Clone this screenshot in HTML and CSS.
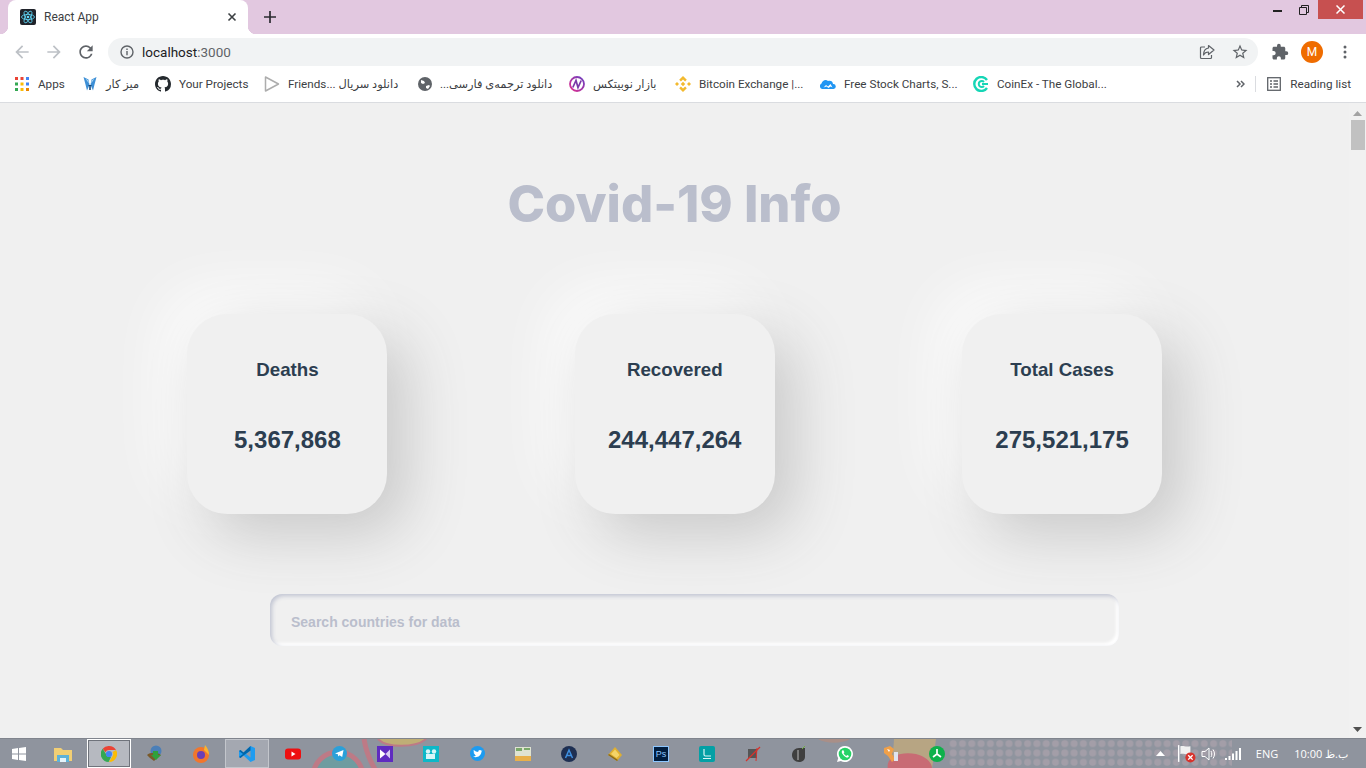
FILE: index.html
```html
<!DOCTYPE html>
<html lang="en">
<head>
    <meta charset="UTF-8">
    <title>React App</title>
    <link rel="stylesheet" href="styles.css">
</head>
<body>
<div class="browser">

    <div class="tabstrip">
        <div class="tab">
            <span class="favicon"><svg width="16" height="16" viewBox="0 0 16 16"><rect width="16" height="16" rx="2" fill="#20232a"/><g fill="none" stroke="#61dafb" stroke-width=".8"><ellipse cx="8" cy="8" rx="6.5" ry="2.6"/><ellipse cx="8" cy="8" rx="6.5" ry="2.6" transform="rotate(60 8 8)"/><ellipse cx="8" cy="8" rx="6.5" ry="2.6" transform="rotate(120 8 8)"/></g><circle cx="8" cy="8" r="1.3" fill="#61dafb"/></svg></span>
            <span class="tab-title">React App</span>
            <svg class="tab-close" width="10" height="10" viewBox="0 0 10 10"><path d="M1.5 1.5l7 7M8.5 1.5l-7 7" stroke="#3c4043" stroke-width="1.6"/></svg>
        </div>
        <svg class="new-tab" width="12" height="12" viewBox="0 0 12 12"><path d="M6 0v12M0 6h12" stroke="#2b2b30" stroke-width="1.7"/></svg>
        <div class="window-controls">
            <svg class="win-min" width="9" height="3" viewBox="0 0 9 3"><rect width="9" height="2" y="1" fill="#222"/></svg>
            <svg class="win-max" width="10" height="10" viewBox="0 0 10 10"><path d="M.5 2.5h7v7h-7zM2.5 2.5v-2h7v7h-2" fill="none" stroke="#222"/></svg>
            <div class="win-close"><svg width="9" height="9" viewBox="0 0 9 9"><path d="M.5.5l8 8M8.500.5l-8 8" stroke="#fff" stroke-width="1.5"/></svg></div>
        </div>
    </div>

    <div class="toolbar">
        <svg class="nav-icon" width="20" height="20" viewBox="0 0 24 24"><path fill="#bdc1c6" d="M20 11H7.83l5.59-5.59L12 4l-8 8 8 8 1.41-1.41L7.83 13H20v-2z"/></svg>
        <svg class="nav-icon" width="20" height="20" viewBox="0 0 24 24"><path fill="#bdc1c6" d="M12 4l-1.41 1.41L16.17 11H4v2h12.17l-5.58 5.59L12 20l8-8z"/></svg>
        <svg class="nav-icon" width="20" height="20" viewBox="0 0 24 24"><path fill="#5f6368" d="M17.65 6.35A7.958 7.958 0 0 0 12 4c-4.42 0-7.99 3.58-7.99 8s3.57 8 7.99 8c3.73 0 6.84-2.55 7.73-6h-2.08A5.99 5.99 0 0 1 12 18c-3.31 0-6-2.69-6-6s2.69-6 6-6c1.66 0 3.14.69 4.22 1.78L13 11h7V4l-2.35 2.35z"/></svg>
        <div class="omnibox">
            <svg width="14" height="14" viewBox="0 0 14 14"><circle cx="7" cy="7" r="6" fill="none" stroke="#5f6368" stroke-width="1.4"/><path d="M7 6v4.2M7 3.6v1.4" stroke="#5f6368" stroke-width="1.4"/></svg>
            <span class="url">localhost<span class="url-port">:3000</span></span>
            <svg class="omni-share" width="16" height="16" viewBox="0 0 16 16"><path d="M6 3H2.5a1 1 0 0 0-1 1v9.500a1 1 0 0 0 1 1h9a1 1 0 0 0 1-1V11" fill="none" stroke="#5f6368" stroke-width="1.2"/><path d="M9.500 1.500l5.500 4.500-5.500 4.500V8C7 8 5.500 9 4.500 11c0-4 2-6.500 5-7z" fill="none" stroke="#5f6368" stroke-width="1.2" stroke-linejoin="round"/></svg>
            <svg class="omni-star" width="18" height="18" viewBox="0 0 24 24"><path fill="#5f6368" d="M22 9.24l-7.19-.62L12 2 9.19 8.63 2 9.24l5.46 4.73L5.82 21 12 17.27 18.18 21l-1.63-7.03L22 9.24zM12 15.4l-3.76 2.27 1-4.28-3.32-2.88 4.38-.38L12 6.1l1.71 4.04 4.38.38-3.32 2.88 1 4.28L12 15.4z"/></svg>
        </div>
        <svg class="ext-icon" width="18" height="18" viewBox="0 0 24 24"><path fill="#5f6368" d="M20.5 11H19V7c0-1.1-.9-2-2-2h-4V3.500a2.500 2.500 0 0 0-5 0V5H4c-1.100 0-1.990.9-1.990 2v3.800H3.500c1.490 0 2.700 1.210 2.700 2.700s-1.210 2.700-2.700 2.700H2V20c0 1.100.9 2 2 2h3.800v-1.500c0-1.490 1.210-2.700 2.700-2.700 1.490 0 2.700 1.210 2.700 2.700V22H17c1.100 0 2-.9 2-2v-4h1.500a2.500 2.500 0 0 0 0-5z"/></svg>
        <span class="avatar">M</span>
        <svg class="menu-icon" width="4" height="14" viewBox="0 0 4 14"><circle cx="2" cy="2" r="1.5" fill="#5f6368"/><circle cx="2" cy="7" r="1.5" fill="#5f6368"/><circle cx="2" cy="12" r="1.5" fill="#5f6368"/></svg>
    </div>

    <div class="bookmarks">
        <a class="bm bm-apps">
            <svg width="14" height="14" viewBox="0 0 14 14"><rect width="3" height="3" fill="#ea4335"/><rect x="5.5" width="3" height="3" fill="#ea4335"/><rect x="11" width="3" height="3" fill="#4285f4"/><rect y="5.5" width="3" height="3" fill="#34a853"/><rect x="5.5" y="5.5" width="3" height="3" fill="#fbbc04"/><rect x="11" y="5.5" width="3" height="3" fill="#4285f4"/><rect y="11" width="3" height="3" fill="#34a853"/><rect x="5.5" y="11" width="3" height="3" fill="#fbbc04"/><rect x="11" y="11" width="3" height="3" fill="#ea8600"/></svg>
            <span>Apps</span>
        </a>
        <a class="bm bm-desk">
            <svg width="16" height="16" viewBox="0 0 16 16"><path d="M1.500 1l5 2.500L7.500 9 5 14.500 3.500 8.500z" fill="#3d8fd6"/><path d="M14.500 1l-5 2.500L8.500 9l2.500 5.500 1.500-6z" fill="#3d8fd6"/><path d="M3.500 2.500l3 2 .3 3zM12.500 2.500l-3 2-.3 3z" fill="#a9d4f2"/><path d="M6.500 9h3v1H8.800v4H7.200v-4H6.500z" fill="#174a7c"/></svg>
            <span class="fa" dir="rtl">میز کار</span>
        </a>
        <a class="bm bm-github">
            <svg width="16" height="16" viewBox="0 0 16 16"><path fill="#24292e" d="M8 0C3.58 0 0 3.58 0 8c0 3.54 2.29 6.53 5.47 7.59.4.07.55-.17.55-.38 0-.19-.01-.82-.01-1.49-2.01.37-2.53-.49-2.69-.94-.09-.23-.48-.94-.82-1.13-.28-.15-.68-.52-.01-.53.63-.01 1.08.58 1.23.82.72 1.21 1.87.87 2.33.66.07-.52.28-.87.51-1.07-1.78-.2-3.64-.89-3.64-3.95 0-.87.31-1.59.82-2.15-.08-.2-.36-1.02.08-2.12 0 0 .67-.21 2.2.82.64-.18 1.32-.27 2-.27.68 0 1.36.09 2 .27 1.53-1.04 2.2-.82 2.2-.82.44 1.1.16 1.92.08 2.12.51.56.82 1.27.82 2.15 0 3.07-1.87 3.75-3.65 3.95.29.25.54.73.54 1.48 0 1.07-.01 1.93-.01 2.2 0 .21.15.46.55.38A8.013 8.013 0 0 0 16 8c0-4.42-3.58-8-8-8z"/></svg>
            <span>Your Projects</span>
        </a>
        <a class="bm bm-friends">
            <svg width="16" height="16" viewBox="0 0 16 16"><path d="M1.500 1v14L14.500 8z" fill="#fff" stroke="#adadad" stroke-width="1.5" stroke-linejoin="round"/></svg>
            <span>Friends... <span class="fa">دانلود سریال</span></span>
        </a>
        <a class="bm bm-farsi">
            <svg width="14" height="14" viewBox="0 0 14 14"><circle cx="7" cy="7" r="7" fill="#5f6368"/><path d="M3 3l3 1 1 2-2 1-2-1zM8 9l3-1 1 1-2 3-2-1z" fill="#fff"/></svg>
            <span class="fa" dir="rtl">دانلود ترجمه‌ی فارسی...</span>
        </a>
        <a class="bm bm-nobitex">
            <svg width="16" height="16" viewBox="0 0 16 16"><defs><linearGradient id="nobi" x1="0" y1="1" x2="1" y2="0"><stop offset="0" stop-color="#e02f8f"/><stop offset="1" stop-color="#6a3fc0"/></linearGradient></defs><circle cx="8" cy="8" r="7" fill="none" stroke="url(#nobi)" stroke-width="1.800"/><path d="M3.800 11.500L7 4.500l2 7 3.200-7" fill="none" stroke="#7a3aa8" stroke-width="1.700"/></svg>
            <span class="fa" dir="rtl">بازار نوبیتکس</span>
        </a>
        <a class="bm bm-binance">
            <svg width="16" height="16" viewBox="0 0 16 16"><g fill="#f3ba2f"><path d="M8 0l3.800 3.800-1.700 1.700L8 3.400 5.900 5.500 4.200 3.800z"/><path d="M8 16l3.800-3.800-1.700-1.700L8 12.600l-2.100-2.100-1.700 1.700z"/><path d="M0 8l2-2 2 2-2 2zM12 8l2-2 2 2-2 2zM5.800 8L8 5.800 10.200 8 8 10.200z"/></g></svg>
            <span>Bitcoin Exchange |...</span>
        </a>
        <a class="bm bm-stock">
            <svg width="16" height="16" viewBox="0 0 16 16"><path d="M2 13a3 3 0 0 1-.5-5.500C2.500 4 6 3 8 5c2-1 5 0 5 3a2.500 2.500 0 0 1 .5 5z" fill="#2196f3"/><path d="M3.500 11.500L6 9l2 1.500L10.500 8l2 3.500-2-1-2 1.500-2-1.500z" fill="#fff"/></svg>
            <span>Free Stock Charts, S...</span>
        </a>
        <a class="bm bm-coinex">
            <svg width="16" height="16" viewBox="0 0 16 16"><path d="M14 4A7 7 0 1 0 14 12" fill="none" stroke="#16d6b6" stroke-width="2.4"/><path d="M11 6A3 3 0 1 0 11 10" fill="none" stroke="#16d6b6" stroke-width="2"/><rect x="9" y="7" width="6" height="2" fill="#16d6b6"/></svg>
            <span>CoinEx - The Global...</span>
        </a>
        <div class="bm-right">
            <svg width="9" height="8" viewBox="0 0 9 8"><path d="M1 1l3 3-3 3M5 1l3 3-3 3" fill="none" stroke="#5f6368" stroke-width="1.5"/></svg>
            <span class="bm-sep"></span>
            <svg width="14" height="14" viewBox="0 0 14 14"><rect x=".7" y=".7" width="12.600" height="12.600" fill="none" stroke="#5f6368" stroke-width="1.3"/><path d="M3 4h2M6.500 4H11M3 7h2M6.500 7H11M3 10h2M6.500 10H11" stroke="#5f6368" stroke-width="1.3"/></svg>
            <span class="reading">Reading list</span>
        </div>
    </div>

    <div class="viewport">
        <main class="page">
            <h1 class="page-title">Covid-19 Info</h1>
            <div class="cards">
                <div class="card">
                    <h3>Deaths</h3>
                    <h2>5,367,868</h2>
                </div>
                <div class="card">
                    <h3>Recovered</h3>
                    <h2>244,447,264</h2>
                </div>
                <div class="card">
                    <h3>Total Cases</h3>
                    <h2>275,521,175</h2>
                </div>
            </div>
            <input class="search" type="text" placeholder="Search countries for data">
        </main>
        <div class="scrollbar">
            <svg width="9" height="5" viewBox="0 0 9 5"><path d="M4.500 0L9 5H0z" fill="#a3a3a3"/></svg>
            <div class="thumb"></div>
            <svg class="scroll-down" width="9" height="5" viewBox="0 0 9 5"><path d="M0 0h9L4.500 5z" fill="#505050"/></svg>
        </div>
    </div>

    <div class="taskbar">
        <svg class="wallpaper" width="1366" height="30" viewBox="0 0 1366 30">
            <defs><pattern id="dots" width="9.300" height="9.300" patternUnits="userSpaceOnUse"><circle cx="4.600" cy="4.600" r="3.500" fill="#a39ea8"/></pattern></defs>
            <circle cx="338" cy="38" r="25" fill="#6f9ca0" stroke="#bd7a86" stroke-width="5"/>
            <path d="M364 0c2 12 6 22 11 30" fill="none" stroke="#bd7a86" stroke-width="5"/>
            <path d="M378 0c8 9 38 9 48 0" fill="#bfae76" stroke="#bd7a86" stroke-width="2"/>
            <path d="M818 0c8 5 24 5 32 0z" fill="#a98f88"/>
            <path d="M894 0h42l-4 30h-40z" fill="#b7a583"/>
            <path d="M888 30c-3-12 12-18 28-15 8 2 16 7 16 15z" fill="#c86b74"/>
            <rect x="948" y="0" width="284" height="30" fill="url(#dots)"/>
        </svg>
        <div class="start">
            <svg width="14" height="14" viewBox="0 0 14 14"><path fill="#fff" d="M0 2l6-.9V6.600H0zM7 1l7-1v6.600H7zM0 7.400h6v5.500L0 12zM7 7.400h7V14l-7-1z"/></svg>
        </div>
        <div class="task-items">
            <div class="task-item"><svg width="18" height="16" viewBox="0 0 18 16"><path d="M0 2h7l2 2h9v11H0z" fill="#f2cf74"/><path d="M3 9h12v7H3z" fill="#5fb2d9"/><path d="M6 12h6v4H6z" fill="#e6f3fa"/></svg></div>
            <div class="task-item is-open"><svg width="16" height="16" viewBox="0 0 16 16"><path d="M8 0a8 8 0 0 1 7 4H8a4 4 0 0 0-3.600 2.300L1.700 2.800A8 8 0 0 1 8 0z" fill="#ea4335"/><path d="M15 4a8 8 0 0 1-7 12l3.400-5.500A4 4 0 0 0 11.500 6z" fill="#fbbc04"/><path d="M1.700 2.800L5 8a4 4 0 0 0 5 2.900L7.600 16A8 8 0 0 1 1.700 2.800z" fill="#34a853"/><circle cx="8" cy="8" r="3.100" fill="#4285f4"/></svg></div>
            <div class="task-item"><svg width="18" height="18" viewBox="0 0 18 18"><circle cx="10" cy="6" r="5.500" fill="#4b7fb8"/><path d="M1 10c3-3 10-3 14 0l-4 3-3 3-4-3z" fill="#7a5a2a"/><path d="M7 6h5v4h3l-5 5-5-5h2z" fill="#2fa13c"/></svg></div>
            <div class="task-item"><svg width="18" height="18" viewBox="0 0 18 18"><circle cx="9" cy="10" r="8" fill="#f2762c"/><path d="M13 0c3 3 4 7 4 10l-5-5z" fill="#fbb32c"/><circle cx="9" cy="10" r="4" fill="#6a3fb5"/></svg></div>
            <div class="task-item is-active"><svg width="16" height="16" viewBox="0 0 16 16"><path d="M11.500 0L16 2v12l-4.500 2-7-6.500L1.500 12 0 11V5l1.500-1 3 2.500z" fill="#1f9cf0"/><path d="M11.500 4.500L7 8l4.500 3.500z" fill="#9299a5"/><path d="M11.500 0v4.500L4.500 9.500 1.500 12 0 11l4-3-4-3 1.500-1 3 2.500z" fill="#0065a9"/></svg></div>
            <div class="task-item"><svg width="16" height="12" viewBox="0 0 16 12"><rect width="16" height="11" y=".5" rx="3" fill="#ee0f10"/><path d="M6.500 3.500L10.500 6l-4 2.500z" fill="#fff"/></svg></div>
            <div class="task-item"><svg width="15" height="15" viewBox="0 0 15 15"><circle cx="7.500" cy="7.500" r="7.500" fill="#2ba0d9"/><path d="M3 7.500l8.500-3.500-1.300 7-2.700-1.800-1.300 1.300-.3-2.300z" fill="#fff"/></svg></div>
            <div class="task-item"><svg width="16" height="16" viewBox="0 0 16 16"><rect width="16" height="16" fill="#5f2bc0"/><path d="M3 3.500L8.500 8 3 12.500z" fill="#fff"/><path d="M13 3.500L8.500 8 13 12.500z" fill="#d9ccf2"/></svg></div>
            <div class="task-item"><svg width="16" height="16" viewBox="0 0 16 16"><rect width="16" height="16" fill="#0cb8c8"/><circle cx="5" cy="5.500" r="2.200" fill="#d8f6f8"/><circle cx="11" cy="5.500" r="2.200" fill="#d8f6f8"/><rect x="3" y="8" width="9" height="5" fill="#d8f6f8"/></svg></div>
            <div class="task-item"><svg width="15" height="15" viewBox="0 0 15 15"><circle cx="7.500" cy="7.500" r="7.500" fill="#1d9bf0"/><path d="M3 10.500c3 1.500 8 .5 8.500-5l1-1-1.200.2c-1-1.300-3.300-.6-3.100 1.300C6.700 6 5 5.200 3.800 4c-.5 1 0 2 .7 2.600-.4 0-.7-.1-.9-.3 0 1 .7 1.800 1.700 2-.3.1-.6.1-.8 0 .2.8 1 1.300 1.800 1.300-1 .7-2 1-3.300.9z" fill="#fff"/></svg></div>
            <div class="task-item"><svg width="16" height="14" viewBox="0 0 16 14"><rect width="16" height="9" fill="#dfe3d2"/><rect x="1" y="1" width="6" height="3" fill="#7aa86a"/><rect x="9" y="1" width="6" height="2" fill="#7aa86a"/><rect y="9" width="16" height="5" fill="#e8b04b"/></svg></div>
            <div class="task-item"><svg width="16" height="16" viewBox="0 0 16 16"><circle cx="8" cy="8" r="8" fill="#1e2f52"/><path d="M4.500 12L8 4l3.500 8M6 9.500h4" fill="none" stroke="#3f8fe0" stroke-width="1.5"/></svg></div>
            <div class="task-item"><svg width="16" height="16" viewBox="0 0 16 16"><path d="M1 9l7-8 7 8-5 6z" fill="#e0b030"/><path d="M1 9l9 6 1-1L2 8z" fill="#8a6a1a"/><path d="M4 8l4-4.500L12.500 9 9.500 12z" fill="#f4d468"/></svg></div>
            <div class="task-item"><span class="ps-icon">Ps</span></div>
            <div class="task-item"><svg width="16" height="16" viewBox="0 0 16 16"><rect width="16" height="16" rx="2" fill="#03a0a5"/><path d="M5 3v5.500c0 1 .7 1.500 1.500 1.500H12M4 12.500h8" fill="none" stroke="#d8f6f6" stroke-width="1.2"/></svg></div>
            <div class="task-item"><svg width="16" height="16" viewBox="0 0 16 16"><rect x="3" y="3" width="9" height="9" fill="#555"/><path d="M1 15L15 1" stroke="#d8322c" stroke-width="1.3"/><path d="M12 2l-1 13" stroke="#d8322c"/></svg></div>
            <div class="task-item"><svg width="14" height="16" viewBox="0 0 14 16"><path d="M7 2C3 2 0 5 0 9s3 7 7 7c3 0 6-2 6-5V2z" fill="#3f3f3f"/><path d="M6 4v10" stroke="#bbb"/><path d="M10 3l3-3" stroke="#6fb33f"/></svg></div>
            <div class="task-item"><svg width="16" height="16" viewBox="0 0 16 16"><path d="M8 0a8 8 0 0 0-6.800 12.200L0 16l3.900-1.100A8 8 0 1 0 8 0z" fill="#fff"/><circle cx="8" cy="8" r="6.300" fill="#25d366"/><path d="M5.500 4.200c-1 .8-1 2.300 0 3.800 1 1.600 2.300 2.800 4 3.400 1.200.4 2.300-.3 2.500-1.400l-1.800-1-.9.9C8.200 9.500 7 8.300 6.600 7.200l.8-1-1-2z" fill="#fff"/></svg></div>
            <div class="task-item"><svg width="16" height="16" viewBox="0 0 16 16"><path d="M1 2l6-2 4 3-2 5 3 5-3 3-4-6-4-3z" fill="#f0a048"/><path d="M4 3l3 1-1 2z" fill="#fff"/><rect x="11" y="6" width="4" height="9" fill="#dfe5ef"/></svg></div>
            <div class="task-item"><svg width="16" height="16" viewBox="0 0 16 16"><circle cx="8" cy="8" r="8" fill="#0db14b"/><path d="M8 3v5M8 8l-4 3M8 8l4 3" stroke="#fff" stroke-width="1.7"/></svg></div>
        </div>
        <div class="tray">
            <svg class="tray-caret" width="9" height="5" viewBox="0 0 9 5"><path d="M4.500 0L9 5H0z" fill="#fff"/></svg>
            <svg class="tray-flag" width="19" height="19" viewBox="0 0 17 17"><path d="M1.500 1v15" stroke="#fff" stroke-width="1.3"/><path d="M3 2c3-1 4 1 9 0v7c-4 1-6-1-9 0z" fill="#f0f0f0"/><circle cx="12" cy="12" r="4.500" fill="#d8322c"/><path d="M10 10l4 4M14 10l-4 4" stroke="#fff" stroke-width="1.2"/></svg>
            <svg class="tray-sound" width="16" height="14" viewBox="0 0 16 14"><path d="M1 4.500h3L8 1v12L4 9.500H1z" fill="none" stroke="#fff"/><path d="M10 4c1 2 1 4 0 6M12 2.500c2 3 2 6 0 9" fill="none" stroke="#fff"/></svg>
            <svg class="tray-signal" width="16" height="12" viewBox="0 0 16 12"><g fill="#fff"><rect y="10" width="2" height="2"/><rect x="3.500" y="8" width="2" height="4"/><rect x="7" y="5.500" width="2" height="6.500"/><rect x="10.500" y="3" width="2" height="9"/><rect x="14" width="2" height="12"/></g></svg>
            <span class="tray-lang">ENG</span>
            <span class="tray-time" dir="rtl">ب.ظ <span dir="ltr">10:00</span></span>
        </div>
    </div>

</div>
</body>
</html>
```

FILE: styles.css
```css
* {
    box-sizing: border-box;
}
html, body {
    margin: 0;
    height: 100%;
    overflow: hidden;
}
body {
    font-family: Roboto, "DejaVu Sans", sans-serif;
    background-color: #f0f0f0;
}
svg {
    display: block;
    flex: none;
}
.browser {
    display: flex;
    flex-direction: column;
    height: 100vh;
}

/* tabs */
.tabstrip {
    display: flex;
    align-items: center;
    height: 34px;
    flex: none;
    padding-left: 8px;
    background-color: #e2c8e0;
}
.tab {
    position: relative;
    display: flex;
    align-items: center;
    align-self: flex-end;
    width: 240px;
    height: 34px;
    padding: 0 11px 0 12px;
    background-color: #fff;
    border-radius: 8px 8px 0 0;
}
.tab::before, .tab::after {
    content: "";
    position: absolute;
    bottom: 0;
    width: 8px;
    height: 8px;
}
.tab::before {
    left: -8px;
    background: radial-gradient(circle at 0 0, transparent 8px, #fff 8.5px);
}
.tab::after {
    right: -8px;
    background: radial-gradient(circle at 100% 0, transparent 8px, #fff 8.5px);
}
.favicon {
    flex: none;
    margin-right: 8px;
}
.tab-title {
    flex: 1;
    font-size: 12px;
    color: #3c4043;
}
.new-tab {
    margin-left: 16px;
}
.window-controls {
    display: flex;
    align-items: center;
    align-self: flex-start;
    margin-left: auto;
    height: 19px;
}
.win-min {
    margin-right: 17px;
    margin-top: 2px;
}
.win-max {
    margin-right: 9px;
}
.win-close {
    display: flex;
    align-items: center;
    justify-content: center;
    width: 45px;
    height: 19px;
    margin-right: 3px;
    background-color: #c75050;
}

/* address bar */
.toolbar {
    display: flex;
    align-items: center;
    height: 34px;
    flex: none;
    padding: 2px 0 0 12px;
    background-color: #fff;
}
.nav-icon {
    margin-right: 12px;
}
.omnibox {
    display: flex;
    align-items: center;
    width: 1150px;
    height: 28px;
    padding: 0 9px 0 12px;
    background-color: #f1f3f4;
    border-radius: 14px;
}
.url {
    margin-left: 8px;
    font-size: 13.5px;
    color: #202124;
}
.url-port {
    color: #5f6368;
}
.omni-share {
    margin-left: auto;
}
.omni-star {
    margin-left: 16px;
}
.ext-icon {
    margin-left: 13px;
}
.avatar {
    display: flex;
    align-items: center;
    justify-content: center;
    flex: none;
    width: 22px;
    height: 22px;
    margin-left: 12px;
    font-size: 12px;
    color: #fff;
    background-color: #ef6c00;
    border-radius: 50%;
}
.menu-icon {
    margin-left: 20px;
}

/* bookmarks */
.bookmarks {
    display: flex;
    align-items: center;
    height: 35px;
    flex: none;
    padding: 0 0 2px 15px;
    font-size: 11.7px;
    color: #3c4043;
    background-color: #fff;
    border-bottom: 1px solid #dadce0;
}
.bm {
    display: flex;
    align-items: center;
    flex: none;
    gap: 8px;
    white-space: nowrap;
}
.bm-apps { width: 67px; gap: 9px; }
.bm-desk { width: 73px; }
.bm-github { width: 109px; }
.bm-friends { width: 154px; }
.bm-farsi { width: 151px; }
.bm-nobitex { width: 106px; }
.bm-binance { width: 145px; }
.bm-stock { width: 153px; }
.bm-coinex { width: 140px; }
.fa {
    font-size: 11.4px;
}
.bm-right {
    display: flex;
    align-items: center;
    margin-left: auto;
    padding-right: 15px;
}
.bm-sep {
    width: 1px;
    height: 16px;
    margin: 0 11px 0 10px;
    background-color: #dadce0;
}
.reading {
    margin-left: 9px;
}

/* page */
.viewport {
    display: flex;
    flex: 1;
    min-height: 0;
    overflow: hidden;
}
.page {
    display: flex;
    flex-direction: column;
    align-items: center;
    flex: 1;
    min-width: 0;
    background-color: #f0f0f0;
}
.page-title {
    margin: 71px 0 0;
    font-family: Inter, sans-serif;
    font-size: 50.6px;
    font-weight: 800;
    line-height: 60px;
    color: #babecc;
}
.cards {
    display: flex;
    justify-content: space-around;
    width: 1162px;
    margin: 80px 0 0 .5px;
}
.card {
    display: flex;
    flex-direction: column;
    align-items: center;
    width: 200px;
    height: 200px;
    padding-top: 45px;
    font-family: "Liberation Sans", Arial, sans-serif;
    color: #2c3e50;
    background-color: #f0f0f0;
    border-radius: 40px;
    box-shadow: 20px 20px 60px #c8c8c8, -20px -20px 60px #fff;
}
.card h3 {
    margin: 0 0 45px;
    font-size: 18.72px;
}
.card h2 {
    margin: 0;
    font-size: 24px;
}
.search {
    width: 849px;
    height: 52px;
    margin: 80px 0 0 40px;
    padding: 4px 21px 0;
    font-family: "Liberation Sans", Arial, sans-serif;
    font-size: 14px;
    font-weight: 700;
    background-color: #f0f0f0;
    border: 0;
    border-radius: 12px;
    outline: none;
    box-shadow: inset 2px 2px 4px #c0c4d2, inset -3px -3px 3px #fff;
}
.search::placeholder {
    color: #babecc;
}
.scrollbar {
    display: flex;
    flex-direction: column;
    align-items: center;
    flex: none;
    width: 17px;
    padding: 8px 0 6px;
    background-color: #f1f1f1;
}
.thumb {
    width: 14px;
    height: 30px;
    margin-top: 4px;
    background-color: #c1c1c1;
}
.scroll-down {
    margin-top: auto;
}

/* windows taskbar */
.taskbar {
    position: relative;
    display: flex;
    align-items: center;
    flex: none;
    height: 30px;
    background-color: #8f949e;
    border-top: 1px solid #80848d;
    overflow: hidden;
}
.wallpaper {
    position: absolute;
    top: 0;
    left: 0;
}
.start, .task-items, .tray {
    position: relative;
}
.start {
    display: flex;
    align-items: center;
    justify-content: center;
    flex: none;
    width: 40px;
    padding-right: 2px;
}
.task-items {
    display: flex;
}
.task-item {
    display: flex;
    align-items: center;
    justify-content: center;
    flex: none;
    width: 46px;
    height: 29px;
}
.is-open {
    width: 44px;
    margin: 0 1px;
    background-color: #b6b9c0;
    border: 1px solid #fff;
    outline: 1px solid #6f737b;
    outline-offset: -2px;
}
.is-active {
    width: 44px;
    margin: 0 1px;
    background-color: #a4a8b1;
    border: 1px solid #c3c6cc;
}
.ps-icon {
    width: 16px;
    height: 16px;
    font-family: "Liberation Sans", Arial, sans-serif;
    font-size: 9px;
    line-height: 14px;
    text-align: center;
    color: #8cc6ff;
    background-color: #001d3f;
    border: 1px solid #8cc6ff;
}
.tray {
    display: flex;
    align-items: center;
    margin-left: auto;
    padding-right: 18px;
    font-family: "Open Sans", sans-serif;
    font-size: 11px;
    color: #fff;
}
.tray-caret { margin-right: 12px; }
.tray-flag { margin-right: 5px; }
.tray-sound { margin-right: 8px; }
.tray-signal { margin-right: 15px; }
.tray-time {
    margin-left: 16px;
}
```
